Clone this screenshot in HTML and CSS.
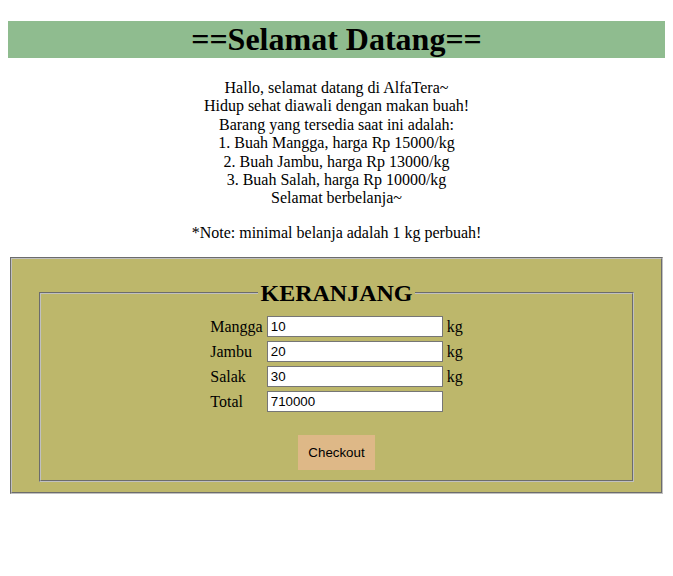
FILE: index.html
```html
<!DOCTYPE html>
<html>
<head>
<meta charset="utf-8">
<link rel="stylesheet" href="styles.css">
</head>
<body>
<h1 class="title">==Selamat Datang==</h1>
<p class="intro">Hallo, selamat datang di AlfaTera~<br>Hidup sehat diawali dengan makan buah!<br>Barang yang tersedia saat ini adalah:<br>1. Buah Mangga, harga Rp 15000/kg<br>2. Buah Jambu, harga Rp 13000/kg<br>3. Buah Salah, harga Rp 10000/kg<br>Selamat berbelanja~</p>
<p class="intro note">*Note: minimal belanja adalah 1 kg perbuah!</p>
<fieldset class="outer">
  <fieldset class="cart">
    <legend class="cart-title">KERANJANG</legend>
    <table class="cart-table">
      <tr><td>Mangga</td><td><input class="qty" type="text" value="10"></td><td>kg</td></tr>
      <tr><td>Jambu</td><td><input class="qty" type="text" value="20"></td><td>kg</td></tr>
      <tr><td>Salak</td><td><input class="qty" type="text" value="30"></td><td>kg</td></tr>
      <tr><td>Total</td><td><input class="qty" type="text" value="710000"></td><td></td></tr>
    </table>
    <div class="actions"><button class="checkout" type="button">Checkout</button></div>
  </fieldset>
</fieldset>
</body>
</html>
```
FILE: styles.css
```css
body {
  margin: 0 8px 8px;
  font-family: "Liberation Serif", "Times New Roman", serif;
  font-size: 16px;
  color: #000;
  background: #fff;
}
.title {
  background: #8fbc8f;
  text-align: center;
  font-size: 32px;
  font-weight: bold;
  margin: 21px 0;
  line-height: 37px;
}
.intro {
  text-align: center;
  margin: 16px 0;
  line-height: 18.4px;
}
.note {
  margin-bottom: 15px;
}
.outer {
  background: #bdb76b;
  margin: 0 2px;
  padding: 20px 12px 10px;
  border: 2px groove #c0c0c0;
}
.cart {
  margin: 0 15px;
  padding: 6px 11px 10px;
  border: 2px groove #c0c0c0;
}
.cart-title {
  margin: 0 auto;
  padding: 0 2px;
  font-size: 24px;
  font-weight: bold;
  line-height: 28px;
}
.cart-table {
  margin: 0 auto;
  border-spacing: 2px;
}
.cart-table td {
  padding: 1px;
  height: 21px;
}
.qty {
  box-sizing: border-box;
  width: 176px;
  height: 21px;
  font-family: "Liberation Sans", Arial, sans-serif;
  font-size: 13.33px;
  border: 1px solid #767676;
  padding: 1px 3px;
  background: #fff;
  color: #000;
}
.actions {
  text-align: center;
  margin-top: 20px;
}
.checkout {
  background: #deb887;
  border: none;
  padding: 10px;
  font-family: "Liberation Sans", Arial, sans-serif;
  font-size: 13.33px;
  color: #000;
}
```
